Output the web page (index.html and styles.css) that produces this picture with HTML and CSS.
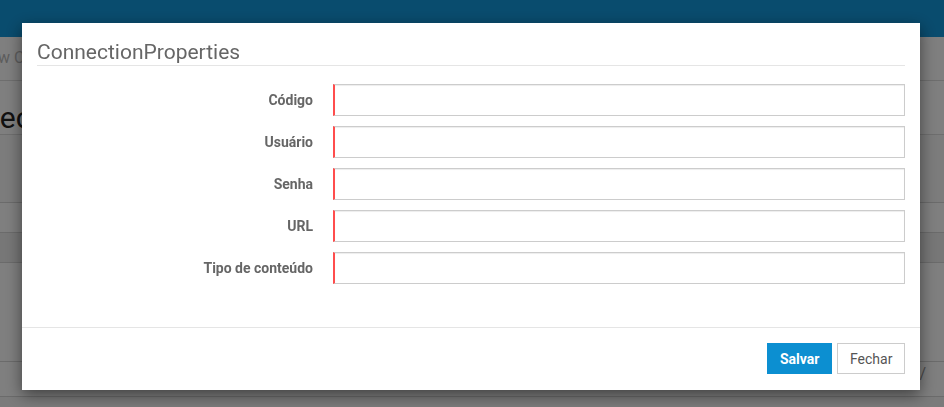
FILE: index.html
```html
<!DOCTYPE html>
<html lang="pt">
<head>
<meta charset="utf-8">
<title>ConnectionProperties</title>
<link rel="stylesheet" href="styles.css">
</head>
<body>
<div class="page">
  <header class="topbar"></header>
  <div class="crumbs">New Connection</div>
  <div class="page-title">Connections</div>
  <div class="table">
    <div class="trow tall"></div>
    <div class="trow"></div>
    <div class="trow shade"></div>
    <div class="trow big"></div>
    <div class="trow foot"><span class="mark">/</span></div>
  </div>
</div>

<div class="backdrop"></div>

<div class="modal">
  <div class="modal-header">
    <h4 class="modal-title">ConnectionProperties</h4>
  </div>
  <form class="modal-body">
    <label class="lbl" for="f1">Código</label>
    <input class="field" id="f1" type="text">
    <label class="lbl" for="f2">Usuário</label>
    <input class="field" id="f2" type="text">
    <label class="lbl" for="f3">Senha</label>
    <input class="field" id="f3" type="password">
    <label class="lbl" for="f4">URL</label>
    <input class="field" id="f4" type="text">
    <label class="lbl" for="f5">Tipo de conteúdo</label>
    <input class="field" id="f5" type="text">
  </form>
  <div class="modal-footer">
    <button class="btn btn-primary" type="button">Salvar</button>
    <button class="btn btn-default" type="button">Fechar</button>
  </div>
</div>
</body>
</html>
```

FILE: styles.css
```css
* { box-sizing: border-box; }

html, body {
  margin: 0;
  padding: 0;
  height: 100%;
  overflow: hidden;
}

body {
  font-family: Roboto, "Liberation Sans", Arial, sans-serif;
  background: #f6f6f6;
  color: #333;
}

.page {
  height: 407px;
}

.topbar {
  height: 37px;
  background: #1398dc;
}

.crumbs {
  height: 44px;
  padding: 11px 0 0 0;
  margin-left: -22px;
  font-size: 16px;
  color: #bbb;
  border-bottom: 1px solid #ddd;
  background: #fff;
  white-space: nowrap;
}

.page-title {
  height: 54px;
  padding-top: 19px;
  margin-left: -70px;
  font-size: 30px;
  color: #222;
  border-bottom: 1px solid #ddd;
  background: #fff;
  white-space: nowrap;
}

.table {
  background: #fff;
}

.trow {
  height: 30px;
  border-bottom: 1px solid #d6d6d6;
}

.trow.tall { height: 68px; background: #f9f9f9; }
.trow.shade { background: #efefef; }
.trow.big { height: 99px; }
.trow.foot {
  height: 35px;
  position: relative;
}

.mark {
  position: absolute;
  right: 18px;
  top: 2px;
  font-size: 16px;
  color: #999;
}

.backdrop {
  position: fixed;
  inset: 0;
  background: rgba(0, 0, 0, 0.5);
}

.modal {
  position: fixed;
  left: 22px;
  top: 23px;
  width: 898px;
  height: 367px;
  background: #fff;
  box-shadow: 0 5px 15px rgba(0, 0, 0, 0.5);
  display: flex;
  flex-direction: column;
}

.modal-header {
  padding: 16px 15px 0 15px;
}

.modal-title {
  margin: 0;
  font-size: 21px;
  font-weight: 400;
  line-height: 26px;
  color: #666;
  border-bottom: 1px solid #e5e5e5;
}

.modal-body {
  margin: 0;
  padding: 18px 15px 0 15px;
  display: grid;
  grid-template-columns: 276px 572px;
  column-gap: 20px;
  row-gap: 10px;
  align-items: center;
  height: 262px;
  align-content: start;
  border-bottom: 1px solid #e5e5e5;
}

.lbl {
  text-align: right;
  font-size: 14px;
  font-weight: 700;
  color: #666;
}

.field {
  height: 32px;
  width: 572px;
  border: 1px solid #ccc;
  border-left: 2px solid #ff4d4d;
  box-shadow: inset 0 1px 1px rgba(0, 0, 0, 0.075);
  background: #fff;
  padding: 6px 12px;
  font: inherit;
  font-size: 14px;
  outline: none;
}

.modal-footer {
  flex: 1;
  display: flex;
  justify-content: flex-end;
  align-items: flex-start;
  gap: 5px;
  padding: 15px 15px 0 15px;
}

.btn {
  height: 31px;
  font-family: Roboto, "Liberation Sans", Arial, sans-serif;
  font-size: 14px;
  padding: 0 12px;
  border-radius: 0;
  cursor: pointer;
}

.btn-primary {
  width: 65px;
  background: #0c8fd1;
  border: 1px solid #0c8fd1;
  color: #fff;
  font-weight: 700;
}

.btn-default {
  width: 68px;
  background: #fff;
  border: 1px solid #ccc;
  color: #555;
}
```
